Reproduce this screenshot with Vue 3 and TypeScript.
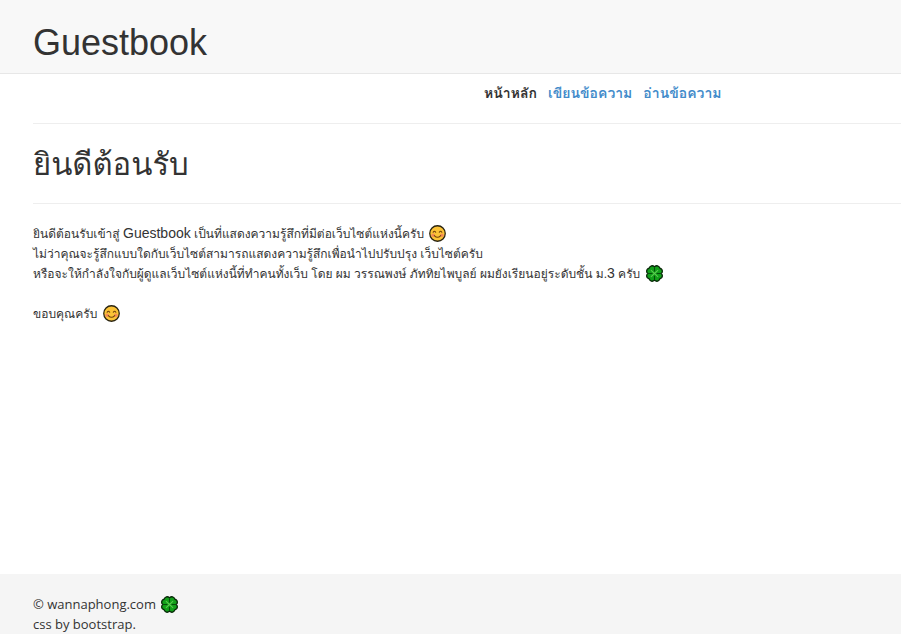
<script setup lang="ts">
interface NavItem {
  label: string
  href: string
  current: boolean
}

const navItems: NavItem[] = [
  { label: 'หน้าหลัก', href: '#home', current: true },
  { label: 'เขียนข้อความ', href: '#write', current: false },
  { label: 'อ่านข้อความ', href: '#read', current: false },
]
</script>

<template>
  <div class="page">
    <svg class="symbols" aria-hidden="true">
      <symbol id="smile" viewBox="0 0 16 16">
        <circle cx="8" cy="8" r="7.3" fill="#fbc336" stroke="#2a2411" stroke-width="1.2" />
        <circle cx="3.9" cy="9.6" r="1.7" fill="#f58b55" />
        <circle cx="12.1" cy="9.6" r="1.7" fill="#f58b55" />
        <path d="M3.9 6.8q1.2-2 2.4 0M9.7 6.8q1.2-2 2.4 0M5 9.9q3 3.2 6 0" fill="none" stroke="#70420b" stroke-width="1" stroke-linecap="round" />
      </symbol>
      <symbol id="clover" viewBox="0 0 16 16">
        <path d="M8 1.6Q6 0 4.4 1.2Q3.2 2 3 3Q.6 3.8.6 5.8Q.6 7.2 1.8 8Q.6 8.8.6 10.2Q.6 12.2 3 13Q3.2 14 4.4 14.8Q6 16 8 14.4Q10 16 11.6 14.8Q12.8 14 13 13Q15.4 12.2 15.4 10.2Q15.4 8.8 14.2 8Q15.4 7.2 15.4 5.8Q15.4 3.8 13 3Q12.8 2 11.6 1.2Q10 0 8 1.6Z" fill="#12a01a" stroke="#082808" stroke-width="1.2" />
        <path d="M4.6 4.8L11.4 11.2M11.4 4.8L4.6 11.2" stroke="#5ecb52" stroke-width="1" />
        <path d="M8 2v4M8 10v4M2 8h4M10 8h4" stroke="#064d0a" stroke-width="1" />
      </symbol>
    </svg>

    <header class="masthead">
      <h1>Guestbook</h1>
    </header>

    <main class="content">
      <nav class="menu" aria-label="เมนู">
        <a
          v-for="item in navItems"
          :key="item.href"
          :href="item.href"
          :class="{ current: item.current }"
          :aria-current="item.current ? 'page' : undefined"
        >{{ item.label }}</a>
      </nav>
      <hr />
      <h2>ยินดีต้อนรับ</h2>
      <hr />
      <p>
        ยินดีต้อนรับเข้าสู่ <span class="latin">Guestbook</span> เป็นที่แสดงความรู้สึกที่มีต่อเว็บไซต์แห่งนี้ครับ
        <svg class="emoji" aria-hidden="true"><use href="#smile" /></svg><br />
        ไม่ว่าคุณจะรู้สึกแบบใดกับเว็บไซต์สามารถแสดงความรู้สึกเพื่อนำไปปรับปรุง เว็บไซต์ครับ<br />
        หรือจะให้กำลังใจกับผู้ดูแลเว็บไซต์แห่งนี้ที่ทำคนทั้งเว็บ โดย ผม วรรณพงษ์ ภัททิยไพบูลย์ ผมยังเรียนอยู่ระดับชั้น ม.<span class="latin">3</span> ครับ
        <svg class="emoji" aria-hidden="true"><use href="#clover" /></svg>
      </p>
      <p>
        ขอบคุณครับ
        <svg class="emoji" aria-hidden="true"><use href="#smile" /></svg>
      </p>
    </main>

    <footer class="footer">
      <div>
        © wannaphong.com
        <svg class="emoji" aria-hidden="true"><use href="#clover" /></svg>
      </div>
      <div>css by bootstrap.</div>
    </footer>
  </div>
</template>

<style>
body {
  margin: 0;
  background: #fff;
}
</style>

<style scoped>
.page {
  display: flex;
  flex-direction: column;
  min-height: 100vh;
  color: #333;
  font-family: "Liberation Sans", Loma, sans-serif;
  font-size: 14px;
  line-height: 20px;
}

.symbols {
  position: absolute;
  width: 0;
  height: 0;
}

.masthead {
  padding: 23px 33px 10px;
  background: #f8f8f8;
  border-bottom: 1px solid #e7e7e7;
}

h1,
h2 {
  margin: 0;
  font-weight: 400;
}

h1 {
  font-size: 36px;
  line-height: 40px;
}

h2 {
  padding-top: 4px;
  font-size: 31px;
  line-height: 36px;
}

.content {
  flex: 1;
  padding-left: 33px;
}

.menu {
  display: flex;
  gap: 11px;
  padding: 9px 0 0 451px;
  font-weight: 700;
}

.menu a {
  color: #428bca;
  text-decoration: none;
  white-space: nowrap;
}

.menu a.current {
  color: #333;
}

hr {
  margin: 20px 0 19px;
  border: 0;
  border-top: 1px solid #eee;
}

p {
  margin: 0 0 19px;
  padding-top: 1px;
  font-size: 12px;
  white-space: nowrap;
}

.latin {
  font-size: 14px;
  line-height: 16px;
}

.emoji {
  width: 17px;
  height: 17px;
  margin-left: 2px;
  vertical-align: -4px;
}

.footer {
  padding: 20px 33px 0;
  min-height: 40px;
  background: #f5f5f5;
  font-family: "Open Sans", sans-serif;
  font-size: 13px;
}
</style>
